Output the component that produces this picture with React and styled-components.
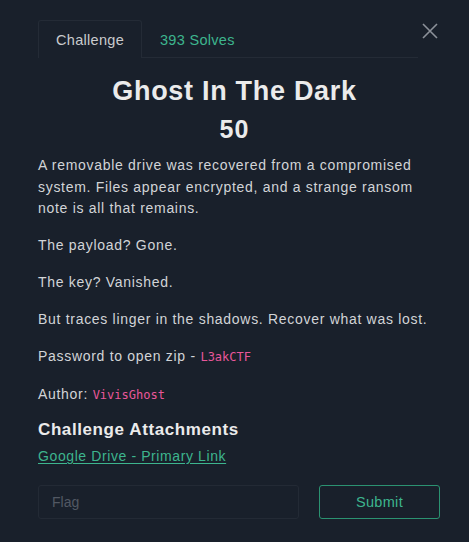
import React from 'react';
import styled, { createGlobalStyle } from 'styled-components';

const Global = createGlobalStyle`
  html, body {
    margin: 0;
    background: #19202b;
  }
  body {
    font-family: "Liberation Sans", Arial, sans-serif;
    color: #d4d6d9;
  }
`;

const Modal = styled.div`
  width: 469px;
  height: 542px;
  box-sizing: border-box;
  padding: 20px 38px 0 38px;
  position: relative;
`;

const Close = styled.button`
  position: absolute;
  top: 22px;
  right: 30px;
  background: none;
  border: 0;
  padding: 0;
  width: 18px;
  height: 18px;
  color: #8c9199;
  cursor: pointer;
`;

const Tabs = styled.div`
  display: flex;
  align-items: stretch;
  width: 380px;
  border-bottom: 1px solid #242b36;
`;

const Tab = styled.div`
  height: 37px;
  display: flex;
  align-items: center;
  padding: 0 17px;
  font-size: 14.5px;
  letter-spacing: 0.3px;
  color: ${p => (p.active ? '#c9cbce' : '#3db58e')};
  border: 1px solid ${p => (p.active ? '#242b36' : 'transparent')};
  border-bottom: 0;
  border-radius: 3px 3px 0 0;
  margin-bottom: -1px;
  background: ${p => (p.active ? '#19202b' : 'transparent')};
`;

const Title = styled.h1`
  margin: 17px 0 0;
  text-align: center;
  font-size: 27px;
  font-weight: 700;
  letter-spacing: 0.7px;
  color: #ebebeb;
  line-height: 32px;
`;

const Points = styled.div`
  text-align: center;
  font-size: 25px;
  font-weight: 700;
  letter-spacing: 1px;
  color: #ebebeb;
  line-height: 28px;
  margin-top: 8px;
`;

const Body = styled.div`
  margin-top: 12px;
  font-size: 14px;
  line-height: 21.5px;
  letter-spacing: 0.7px;
  color: #d2d4d7;
`;

const P = styled.p`
  margin: 0 0 15.5px;
  &:last-child {
    margin-bottom: 0;
  }
`;

const Code = styled.code`
  font-family: "DejaVu Sans Mono", "Liberation Mono", monospace;
  font-size: 12px;
  color: #e8579a;
  letter-spacing: 0;
`;

const Heading = styled.h3`
  margin: 12.5px 0 0;
  font-size: 17px;
  font-weight: 700;
  letter-spacing: 0.6px;
  color: #ebebeb;
  line-height: 22px;
`;

const Link = styled.a`
  display: inline-block;
  margin-top: 7px;
  font-size: 14px;
  letter-spacing: 0.6px;
  color: #3db58e;
  text-decoration: underline;
  text-underline-offset: 2px;
`;

const FlagRow = styled.form`
  display: flex;
  align-items: center;
  justify-content: space-between;
  margin-top: 20px;
  width: 402px;
`;

const Input = styled.input`
  width: 261px;
  height: 34px;
  box-sizing: border-box;
  background: #19202b;
  border: 1px solid #232a35;
  border-radius: 3px;
  padding: 0 13px;
  font-family: inherit;
  font-size: 14px;
  color: #d2d4d7;
  outline: none;
  &::placeholder {
    color: #525863;
  }
`;

const Submit = styled.button`
  width: 121px;
  height: 34px;
  box-sizing: border-box;
  background: transparent;
  border: 1px solid #2b9271;
  border-radius: 3px;
  font-family: inherit;
  font-size: 14.5px;
  letter-spacing: 0.3px;
  color: #3db58e;
`;

const XIcon = () => (
  <svg width="18" height="18" viewBox="0 0 18 18" fill="none" stroke="currentColor" strokeWidth="1.6">
    <path d="M2 2 L16 16 M16 2 L2 16" />
  </svg>
);

export default function App() {
  return (
    <>
      <Global />
      <Modal>
        <Close aria-label="Close"><XIcon /></Close>
        <Tabs>
          <Tab active>Challenge</Tab>
          <Tab>393 Solves</Tab>
        </Tabs>
        <Title>Ghost In The Dark</Title>
        <Points>50</Points>
        <Body>
          <P>A removable drive was recovered from a compromised system. Files appear encrypted, and a strange ransom note is all that remains.</P>
          <P>The payload? Gone.</P>
          <P>The key? Vanished.</P>
          <P>But traces linger in the shadows. Recover what was lost.</P>
          <P>Password to open zip - <Code>L3akCTF</Code></P>
          <P>Author: <Code>VivisGhost</Code></P>
        </Body>
        <Heading>Challenge Attachments</Heading>
        <Link href="#">Google Drive - Primary Link</Link>
        <FlagRow onSubmit={e => e.preventDefault()}>
          <Input placeholder="Flag" />
          <Submit type="submit">Submit</Submit>
        </FlagRow>
      </Modal>
    </>
  );
}
